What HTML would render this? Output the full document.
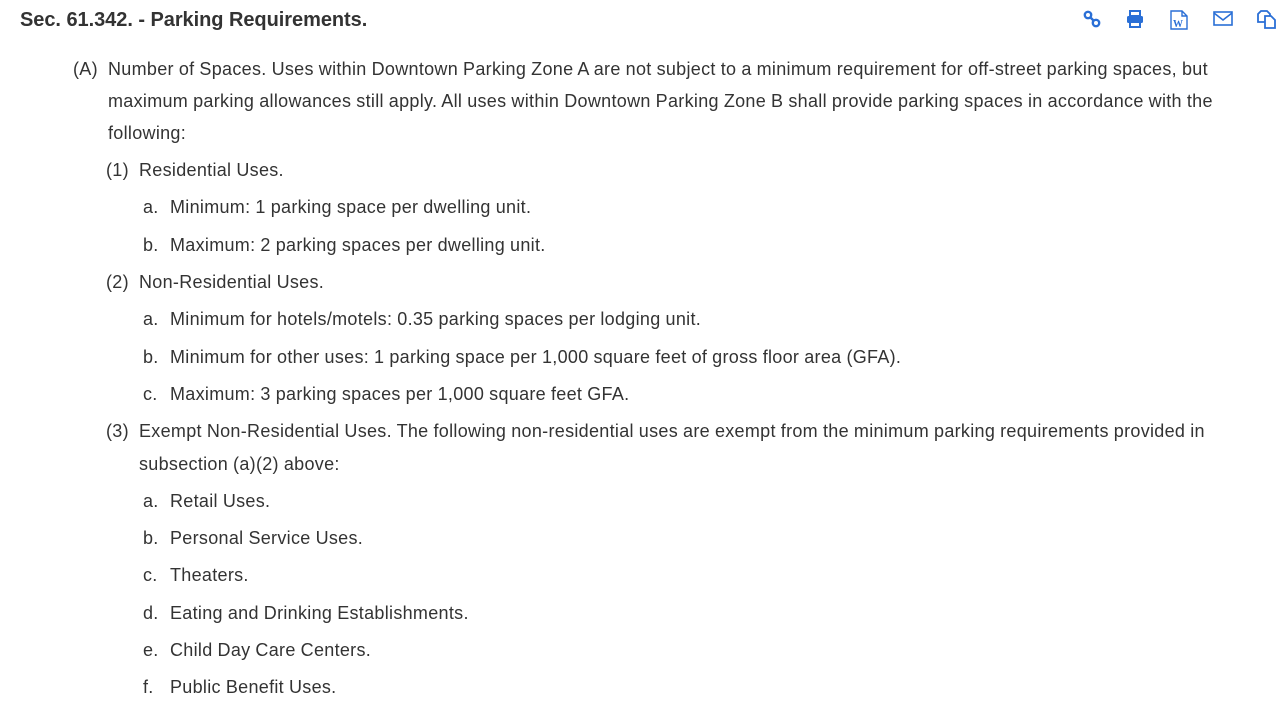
<!DOCTYPE html>
<html><head><style>
body{margin:0;width:1288px;height:707px;background:#fff;font-family:"Liberation Sans",sans-serif;color:#333;overflow:hidden;position:relative}
.l{position:absolute;font-size:18px;letter-spacing:0.3px;word-spacing:-0.3px;line-height:22px;white-space:nowrap}
h1{position:absolute;left:20px;top:8px;margin:0;font-size:20px;font-weight:bold;color:#333;line-height:24px;letter-spacing:-0.05px}
svg{position:absolute;top:10px}
</style></head><body>
<h1>Sec. 61.342. - Parking Requirements.</h1>
<svg style="left:1083px" width="18" height="18" viewBox="0 0 18 18" fill="none" stroke="#2a6fd6" stroke-width="2.4"><circle cx="5" cy="5" r="3.2"/><circle cx="13" cy="13" r="3.2"/><path d="M7 7l4 4"/></svg>
<svg style="left:1126px" width="18" height="18" viewBox="0 0 18 18" fill="#2a6fd6"><rect x="4" y="1" width="10" height="5" fill="none" stroke="#2a6fd6" stroke-width="2"/><rect x="1" y="6" width="16" height="7" rx="1.5"/><rect x="4" y="12" width="10" height="5" fill="#fff" stroke="#2a6fd6" stroke-width="2"/></svg>
<svg style="left:1170px" width="18" height="20" viewBox="0 0 18 20" fill="none" stroke="#2a6fd6" stroke-width="1.4"><path d="M1 1h11l5 5v13H1z M12 1v5h5"/><text x="3" y="17" font-size="10" font-weight="bold" fill="#2a6fd6" stroke="none" font-family="Liberation Serif">W</text></svg>
<svg style="left:1213px" width="20" height="16" viewBox="0 0 20 16" fill="none" stroke="#2a6fd6" stroke-width="1.6"><rect x="1" y="2" width="18" height="13"/><path d="M1 3l9 7 9-7"/></svg>
<svg style="left:1257px" width="19" height="19" viewBox="0 0 19 19" fill="none" stroke="#2a6fd6" stroke-width="1.8"><path d="M4 1h6l3 3v8H1V4z"/><path d="M8 6h6l4 4v8H8z" fill="#fff"/></svg>

<div class="l" style="left:73px;top:58px">(A)</div>
<div class="l" style="left:108px;top:58px">Number of Spaces. Uses within Downtown Parking Zone A are not subject to a minimum requirement for off-street parking spaces, but</div>
<div class="l" style="left:108px;top:90px">maximum parking allowances still apply. All uses within Downtown Parking Zone B shall provide parking spaces in accordance with the</div>
<div class="l" style="left:108px;top:122px">following:</div>
<div class="l" style="left:106px;top:159px">(1)</div><div class="l" style="left:139px;top:159px">Residential Uses.</div>
<div class="l" style="left:143px;top:196px">a.</div><div class="l" style="left:170px;top:196px">Minimum: 1 parking space per dwelling unit.</div>
<div class="l" style="left:143px;top:234px">b.</div><div class="l" style="left:170px;top:234px">Maximum: 2 parking spaces per dwelling unit.</div>
<div class="l" style="left:106px;top:271px">(2)</div><div class="l" style="left:139px;top:271px">Non-Residential Uses.</div>
<div class="l" style="left:143px;top:308px">a.</div><div class="l" style="left:170px;top:308px">Minimum for hotels/motels: 0.35 parking spaces per lodging unit.</div>
<div class="l" style="left:143px;top:346px">b.</div><div class="l" style="left:170px;top:346px">Minimum for other uses: 1 parking space per 1,000 square feet of gross floor area (GFA).</div>
<div class="l" style="left:143px;top:383px">c.</div><div class="l" style="left:170px;top:383px">Maximum: 3 parking spaces per 1,000 square feet GFA.</div>
<div class="l" style="left:106px;top:420px">(3)</div><div class="l" style="left:139px;top:420px">Exempt Non-Residential Uses. The following non-residential uses are exempt from the minimum parking requirements provided in</div>
<div class="l" style="left:139px;top:453px">subsection (a)(2) above:</div>
<div class="l" style="left:143px;top:490px">a.</div><div class="l" style="left:170px;top:490px">Retail Uses.</div>
<div class="l" style="left:143px;top:527px">b.</div><div class="l" style="left:170px;top:527px">Personal Service Uses.</div>
<div class="l" style="left:143px;top:564px">c.</div><div class="l" style="left:170px;top:564px">Theaters.</div>
<div class="l" style="left:143px;top:602px">d.</div><div class="l" style="left:170px;top:602px">Eating and Drinking Establishments.</div>
<div class="l" style="left:143px;top:639px">e.</div><div class="l" style="left:170px;top:639px">Child Day Care Centers.</div>
<div class="l" style="left:143px;top:676px">f.</div><div class="l" style="left:170px;top:676px">Public Benefit Uses.</div>
</body></html>
